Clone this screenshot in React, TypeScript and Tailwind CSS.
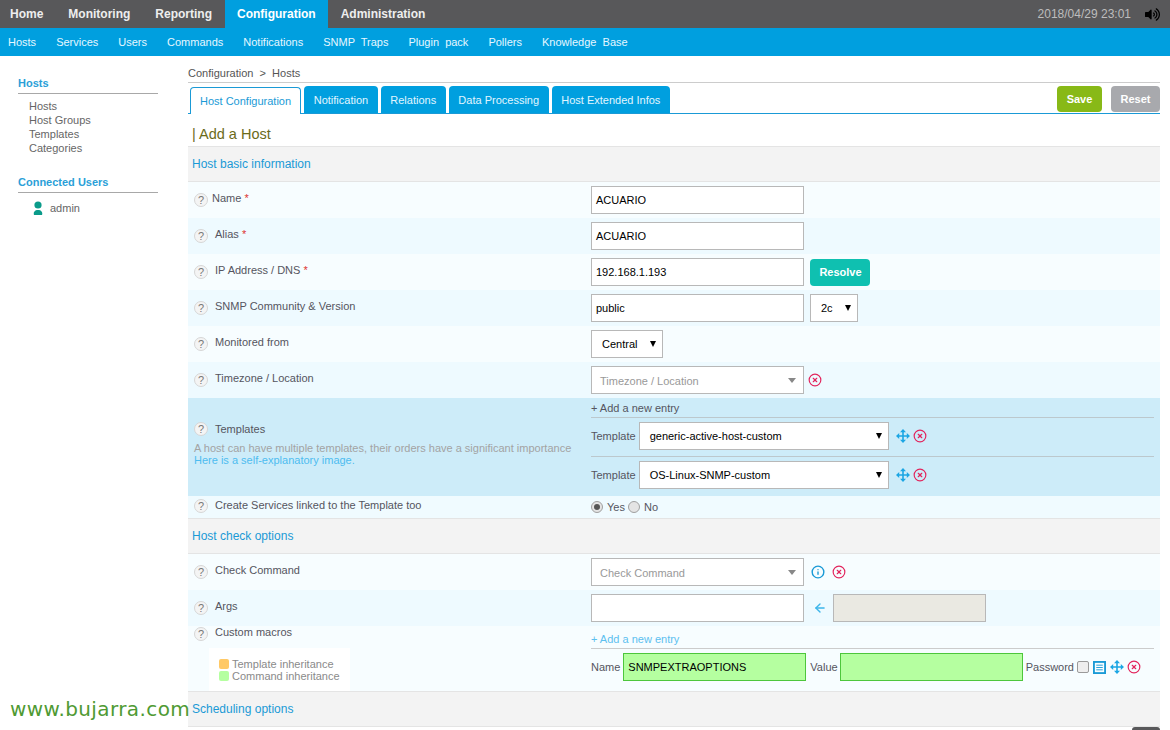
import React from "react";
import { CircleX, Info, ArrowLeft } from "lucide-react";
import { FaVolumeUp } from "react-icons/fa";

const TOP = ["Home", "Monitoring", "Reporting", "Configuration", "Administration"];
const SUB = ["Hosts", "Services", "Users", "Commands", "Notifications", "SNMP  Traps", "Plugin  pack", "Pollers", "Knowledge  Base"];
const TABS = ["Notification", "Relations", "Data Processing", "Host Extended Infos"];

function Help() {
  return (
    <span className="flex size-[14px] shrink-0 items-center justify-center rounded-full border-[1.5px] border-[#d6d6d6] bg-[#f4f4f4] text-[11px] leading-none text-[#777777]">?</span>
  );
}

function Del() {
  return <CircleX className="size-[14px] shrink-0 text-[#e2245c]" strokeWidth={2} />;
}

// four way arrow with filled heads
function Drag() {
  return (
    <svg viewBox="0 0 14 14" className="size-[14px] shrink-0 text-[#1ba6e4]">
      <path d="M3 7h8M7 3v8" stroke="currentColor" strokeWidth="1.6" />
      <path d="M7 0l3 3.2H4zM7 14l3-3.2H4zM0 7l3.2-3v6zM14 7l-3.2-3v6z" fill="currentColor" />
    </svg>
  );
}

function Caret({ className }: { className: string }) {
  return (
    <svg viewBox="0 0 10 7" preserveAspectRatio="none" className={className}>
      <path d="M0 0h10L5 7z" fill="currentColor" />
    </svg>
  );
}

function Field({ value = "", w = "w-[213px]", cls = "bg-white border-[#b8b8b8]" }: { value?: string; w?: string; cls?: string }) {
  return <div className={`flex h-[28px] shrink-0 items-center border px-[4px] text-[11px] text-black ${w} ${cls}`}>{value}</div>;
}

// native-looking select with black caret
function Sel({ value, w }: { value: string; w: string }) {
  return (
    <div className={`flex h-[28px] shrink-0 items-center justify-between border border-[#b8b8b8] bg-white pl-[10px] pr-[6px] text-[11px] text-black ${w}`}>
      {value}
      <Caret className="h-[6px] w-[6px] text-black" />
    </div>
  );
}

// select2 style placeholder with grey caret
function Placeholder({ text }: { text: string }) {
  return (
    <div className="flex h-[28px] w-[213px] shrink-0 items-center justify-between border border-[#b8b8b8] bg-white pl-[8px] pr-[7px] text-[11px] text-[#999999]">
      <span className="pt-[2px]">{text}</span>
      <Caret className="h-[5px] w-[8px] text-[#888888]" />
    </div>
  );
}

function Row({ label, star, gap = "gap-[7px]", bg, children }: { label: string; star?: boolean; gap?: string; bg: string; children: React.ReactNode }) {
  return (
    <div className={`grid h-[36px] grid-cols-[403px_1fr] ${bg}`}>
      <div className={`flex items-start pl-[6px] pt-[10px] text-[11px] leading-[14px] text-[#555560] ${gap}`}>
        <span className="mt-[1px]"><Help /></span>
        <span className="-mt-[1px]">{label}{star && <span className="text-[#d33]"> *</span>}</span>
      </div>
      <div className="flex items-center gap-[6px]">{children}</div>
    </div>
  );
}

function Header({ children }: { children: string }) {
  return (
    <div className="flex h-[36px] items-center border-y border-[#e4e4e4] bg-[#f3f3f3] pl-[4px] text-[12px] text-[#1a9ad6]">{children}</div>
  );
}

function Radio({ on }: { on?: boolean }) {
  return (
    <span className="flex size-[12px] items-center justify-center rounded-full border border-[#a0a0a0] bg-[#e4e4e4]">
      {on && <span className="size-[6px] rounded-full bg-[#555555]" />}
    </span>
  );
}

export default function App() {
  return (
    <div className="relative h-[730px] w-[1170px] overflow-hidden bg-white font-['Liberation_Sans',Arial,sans-serif]">
      <div className="flex h-[28px] items-center justify-between bg-[#58585a] pr-[10px]">
        <div className="flex h-full">
          {TOP.map((t) => (
            <span key={t} className={`flex h-full items-center px-[12.5px] text-[12px] font-bold first:pl-[10px] ${t === "Configuration" ? "bg-[#009fdf] text-white" : "text-[#eeeeee]"}`}>{t}</span>
          ))}
        </div>
        <div className="flex items-center gap-[14px] text-[12px] text-[#bdbdbd]">
          2018/04/29 23:01
          <FaVolumeUp className="size-[15px] text-black" />
        </div>
      </div>
      <div className="flex h-[28px] items-center gap-[20px] whitespace-pre bg-[#009fdf] pl-[8px] text-[11px] text-[#e6f7ff]">
        {SUB.map((s) => <span key={s}>{s}</span>)}
      </div>

      <div className="flex">
        <aside className="w-[188px] shrink-0 pl-[18px] pr-[30px] pt-[21px] text-[11px]">
          <div className="border-b border-[#a8a8a8] pb-[3px] font-bold leading-[13px] text-[#2b9fd8]">Hosts</div>
          <ul className="mt-[5px] pl-[11px] leading-[14px] text-[#666666]">
            <li>Hosts</li>
            <li>Host Groups</li>
            <li>Templates</li>
            <li>Categories</li>
          </ul>
          <div className="mt-[21px] border-b border-[#a8a8a8] pb-[3px] font-bold leading-[13px] text-[#2b9fd8]">Connected Users</div>
          <div className="mt-[7px] flex items-center gap-[6px] pl-[14px] text-[#666666]">
            <svg viewBox="0 0 12 14" className="h-[14px] w-[12px] text-[#0b9b8a]">
              <circle cx="6" cy="4" r="3.6" fill="currentColor" />
              <path d="M2 14c-1-3 1-5 4-5s5 2 4 5z" fill="currentColor" />
            </svg>
            admin
          </div>
        </aside>

        <main className="w-[972px] shrink-0">
          <div className="flex h-[27px] items-end whitespace-pre border-b border-[#cccccc] pb-[2px] text-[11px] leading-[13px] text-[#555555]">Configuration  &gt;  Hosts</div>
          <div className="flex h-[31px] items-end justify-between border-b border-[#1a9ad6] pl-[2px]">
            <div className="flex items-end gap-[3px]">
              <span className="-mb-[1px] flex h-[27px] items-center rounded-t-[4px] border border-b-0 border-[#1a9ad6] bg-white px-[9px] text-[11px] text-[#1a9ad6]">Host Configuration</span>
              {TABS.map((t) => (
                <span key={t} className="flex h-[27px] items-center rounded-t-[4px] bg-[#009fdf] px-[9.6px] pt-[1px] text-[11px] text-[#e0f6ff]">{t}</span>
              ))}
            </div>
            <div className="mb-[1px] flex gap-[9px]">
              <span className="flex h-[26px] w-[45px] items-center justify-center rounded-[4px] bg-[#88b917] text-[11px] font-bold text-white">Save</span>
              <span className="flex h-[26px] w-[49px] items-center justify-center rounded-[4px] bg-[#a8a9ad] text-[11px] font-bold text-white">Reset</span>
            </div>
          </div>
          <div className="flex h-[32px] items-center pl-[4px] pt-[10px] text-[14.5px] text-[#6b6b1a]">| Add a Host</div>

          <Header>Host basic information</Header>
          <Row label="Name" star gap="gap-[4px]" bg="bg-[#f7fdff]"><Field value="ACUARIO" /></Row>
          <Row label="Alias" star bg="bg-[#eefaff]"><Field value="ACUARIO" /></Row>
          <Row label="IP Address / DNS" star bg="bg-[#f7fdff]">
            <Field value="192.168.1.193" />
            <span className="flex h-[27px] w-[60px] items-center justify-center rounded-[4px] bg-[#0fc0b0] pl-[1px] text-[11px] font-bold text-white">Resolve</span>
          </Row>
          <Row label="SNMP Community & Version" bg="bg-[#eefaff]">
            <Field value="public" />
            <Sel value="2c" w="w-[48px]" />
          </Row>
          <Row label="Monitored from" bg="bg-[#f7fdff]"><Sel value="Central" w="w-[72px]" /></Row>
          <Row label="Timezone / Location" bg="bg-[#eefaff]">
            <Placeholder text="Timezone / Location" />
            <span className="-ml-[2px]"><Del /></span>
          </Row>

          <div className="grid h-[98px] grid-cols-[403px_1fr] bg-[#cdecf9]">
            <div className="pl-[6px] pt-[24px] text-[11px] leading-[12px]">
              <div className="flex items-center gap-[7px] text-[#555560]"><Help />Templates</div>
              <div className="mt-[6px] text-[#a3a3a3]">A host can have multiple templates, their orders have a significant importance</div>
              <div className="text-[#4dbcf0]">Here is a self-explanatory image.</div>
            </div>
            <div className="pr-[6px]">
              <div className="flex h-[20px] items-center border-b border-[#bcc8cd] pt-[2px] text-[11px] text-[#555560]">+ Add a new entry</div>
              <div className="flex h-[39px] items-center gap-[3px] border-b border-[#bcc8cd] pb-[2px] text-[11px] text-[#555560]">
                Template
                <Sel value="generic-active-host-custom" w="w-[250px]" />
                <span className="ml-[4px] flex gap-[3px]"><Drag /><Del /></span>
              </div>
              <div className="flex h-[39px] items-center gap-[3px] pb-[3px] text-[11px] text-[#555560]">
                Template
                <Sel value="OS-Linux-SNMP-custom" w="w-[250px]" />
                <span className="ml-[4px] flex gap-[3px]"><Drag /><Del /></span>
              </div>
            </div>
          </div>

          <div className="grid h-[22px] grid-cols-[403px_1fr] bg-[#f0fbff]">
            <div className="flex items-start gap-[7px] pl-[6px] pt-[3px] text-[11px] leading-[14px] text-[#555560]">
              <Help />
              <span className="-mt-[1px]">Create Services linked to the Template too</span>
            </div>
            <div className="flex items-center gap-[4px] text-[11px] text-[#555560]">
              <Radio on />Yes
              <span className="-ml-[1px]"><Radio /></span>No
            </div>
          </div>

          <Header>Host check options</Header>
          <Row label="Check Command" bg="bg-[#f7fdff]">
            <Placeholder text="Check Command" />
            <Info className="ml-[1px] size-[14px] text-[#1a9ad6]" strokeWidth={2.4} />
            <span className="ml-[1px]"><Del /></span>
          </Row>
          <Row label="Args" bg="bg-[#eefaff]">
            <Field />
            <ArrowLeft className="ml-[3px] size-[14px] text-[#3db5ea]" strokeWidth={2.4} />
            <Field w="w-[153px]" cls="bg-[#eae9e2] border-[#b8b8b8]" />
          </Row>

          <div className="grid h-[65px] grid-cols-[403px_1fr] bg-[#f7fdff]">
            <div className="pl-[6px]">
              <div className="flex items-start gap-[7px] text-[11px] leading-[14px] text-[#555560]">
                <span className="mt-[1px]"><Help /></span>
                <span className="-mt-[1px]">Custom macros</span>
              </div>
              <div className="ml-[15px] mt-[7px] h-[43px] w-[141px] whitespace-nowrap bg-white pl-[10px] pt-[10px] text-[11px] leading-[12px] text-[#8a8a8a]">
                <div className="flex items-center gap-[3px]"><span className="size-[10px] rounded-[2px] bg-[#ffc966]" />Template inheritance</div>
                <div className="flex items-center gap-[3px]"><span className="size-[10px] rounded-[2px] bg-[#b5ffa0]" />Command inheritance</div>
              </div>
            </div>
            <div className="pr-[6px]">
              <div className="flex h-[23px] items-end border-b border-[#cccccc] pb-[1px] text-[11px] text-[#5cc0ef]">+ Add a new entry</div>
              <div className="mt-[4px] flex items-center gap-[3px] text-[11px] text-[#555560]">
                Name
                <Field value="SNMPEXTRAOPTIONS" w="w-[183px]" cls="bg-[#b5ffa0] border-[#4dc63c]" />
                <span className="ml-[1px] -mr-[1px]">Value</span>
                <Field w="w-[183px]" cls="bg-[#b5ffa0] border-[#4dc63c]" />
                <span>Password</span>
                <span className="size-[12px] rounded-[2px] border border-[#9a9a9a] bg-[#eeeeee]" />
                <svg viewBox="0 0 14 14" className="ml-[1px] size-[13px] text-[#1a9ad6]">
                  <rect x="1" y="1" width="12" height="12" fill="none" stroke="currentColor" strokeWidth="2" />
                  <path d="M3.5 4.5h7M3.5 7h7M3.5 9.5h7" stroke="currentColor" strokeWidth="1" />
                </svg>
                <span className="ml-[1px]"><Drag /></span>
                <Del />
              </div>
            </div>
          </div>

          <Header>Scheduling options</Header>
        </main>
      </div>

      <div className="absolute bottom-0 left-[1132px] h-[3px] w-[28px] rounded-t-[5px] bg-[#58585a]" />
      <div className="absolute left-[10px] top-[694px] font-['DejaVu_Sans',sans-serif] text-[20px] tracking-[0.4px] text-[#4f9a33]">www.bujarra.com</div>
    </div>
  );
}
